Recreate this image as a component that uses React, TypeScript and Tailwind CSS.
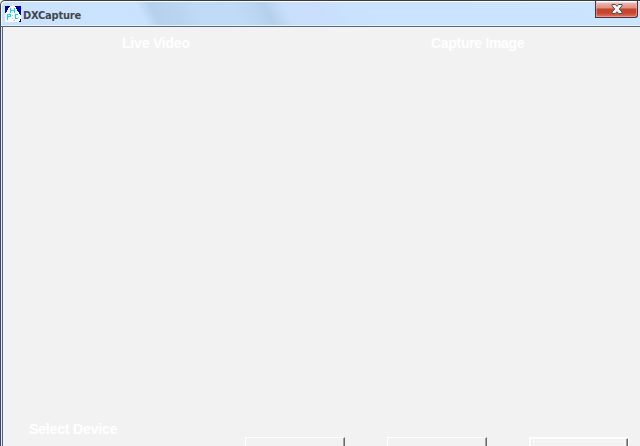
function AppIcon() {
  return (
    <svg className="block h-4 w-4 shrink-0" viewBox="0 0 16 16" shapeRendering="crispEdges">
      <rect width="16" height="16" fill="#fff" />
      <path d="M0 0h5v1H4v1H3v2H2v2H1v1H0zM10 0h6v9h-1V8h-1V6h-1V5h-1V3h-1V1h-1zM15 13h1v3h-2v-1h1z" fill="#0000a8" />
      <path d="M5 2h1v2h3V2h1v5H9V5H6v2H5zM2 8h4v3H3v3H2zM3 9v1h2V9zM10 8h3v1h-2v3h2v1h-3z" fill="#00e0ea" />
      <path d="M7 12h1v1H7zM8 14h2v1H8zM13 11h1v1h-1zM7 9h1v1H7z" fill="#b7c5d3" />
    </svg>
  );
}

function CloseButton() {
  return (
    <button className="flex h-[17px] w-[43px] items-center justify-center rounded-br-[3px] border border-t-0 border-[#51313a] bg-[linear-gradient(180deg,#fff_0px,#fff_1px,#edb7ab_2px,#dc9082_7px,#c3442d_8px,#c9452d_12px,#dd7965_16px)] p-0 shadow-[inset_1px_0_0_#f0b9ad80,inset_-1px_-1px_0_#f0b9ad80]" aria-label="Close">
      <svg className="block h-[10px] w-3" viewBox="0 0 12 10">
        <path d="M1 .5h3.3L6 2.3 7.7.5H11v1.4L8.2 5 11 8.1v1.4H7.7L6 7.7 4.3 9.5H1V8.1L3.8 5 1 1.9z" fill="#f5f5f5" stroke="#4f4d57" />
      </svg>
    </button>
  );
}

function TitleBar() {
  return (
    <header className="flex h-[27px] shrink-0 justify-between rounded-tl-[5px] border-b border-l border-t border-b-[#59657a] border-l-[#41475a] border-t-[#38394d] bg-[linear-gradient(63deg,#cbe3fe_0%,#c9e2fd_22.5%,#b6d1ed_24.5%,#b8d4f0_28%,#bfdaf7_31%,#c0dbf8_37%,#bbd6f3_40%,#b5d0ec_42%,#c8dffb_45%,#c9defc_50%,#c9e3fd_56%,#cbe5ff_100%)] shadow-[inset_1px_1px_0_#fff,inset_0_-1px_0_#e8f3ff]">
      <div className="flex pl-1 pt-[5px]">
        <AppIcon />
        <h1 className="ml-[2px] mt-[2px] whitespace-nowrap font-['DejaVu_Sans_Condensed','DejaVu_Sans',sans-serif] text-[11px] font-bold leading-[15px] tracking-[-0.2px] text-[#42464e]">DXCapture</h1>
      </div>
      <div className="pr-[2px]"><CloseButton /></div>
    </header>
  );
}

const labelClass = "whitespace-nowrap font-['Liberation_Sans',sans-serif] text-[14px] font-bold leading-4 text-white";

export default function App() {
  return (
    <div className="flex h-[446px] w-[640px] flex-col overflow-hidden bg-[#f2f2f2]">
      <TitleBar />
      <main className="flex min-h-0 flex-1 flex-col border-l border-[#41475a] shadow-[inset_1px_0_0_#e3e9f8,inset_2px_0_0_#59657a]">
        <div className="flex pl-[121px] pt-2">
          <h2 className={`${labelClass} w-[309px] tracking-[-0.2px]`}>Live Video</h2>
          <h2 className={`${labelClass} tracking-[-0.3px]`}>Capture Image</h2>
        </div>
        <footer className="mt-auto flex h-[25px] shrink-0 items-start pl-7">
          <h2 className={`${labelClass} w-[216px] tracking-[-0.15px]`}>Select Device</h2>
          <div className="mt-4 h-[23px] w-[100px] shrink-0 border-l border-r border-t border-l-white border-r-[#696969] border-t-white shadow-[inset_-1px_0_0_#a0a0a0]" />
          <div className="ml-[42px] mt-4 h-[23px] w-[100px] shrink-0 border-l border-r border-t border-l-white border-r-[#696969] border-t-white shadow-[inset_-1px_0_0_#a0a0a0]" />
          <div className="ml-[42px] mt-4 h-[23px] w-[100px] shrink-0 border border-white">
            <div className="h-full border-l border-r border-t border-l-white border-r-[#696969] border-t-white pl-[2px] pr-[2px] pt-[2px] shadow-[inset_-1px_0_0_#a0a0a0]">
              <div className="h-full border border-dotted border-white" />
            </div>
          </div>
        </footer>
      </main>
    </div>
  );
}
